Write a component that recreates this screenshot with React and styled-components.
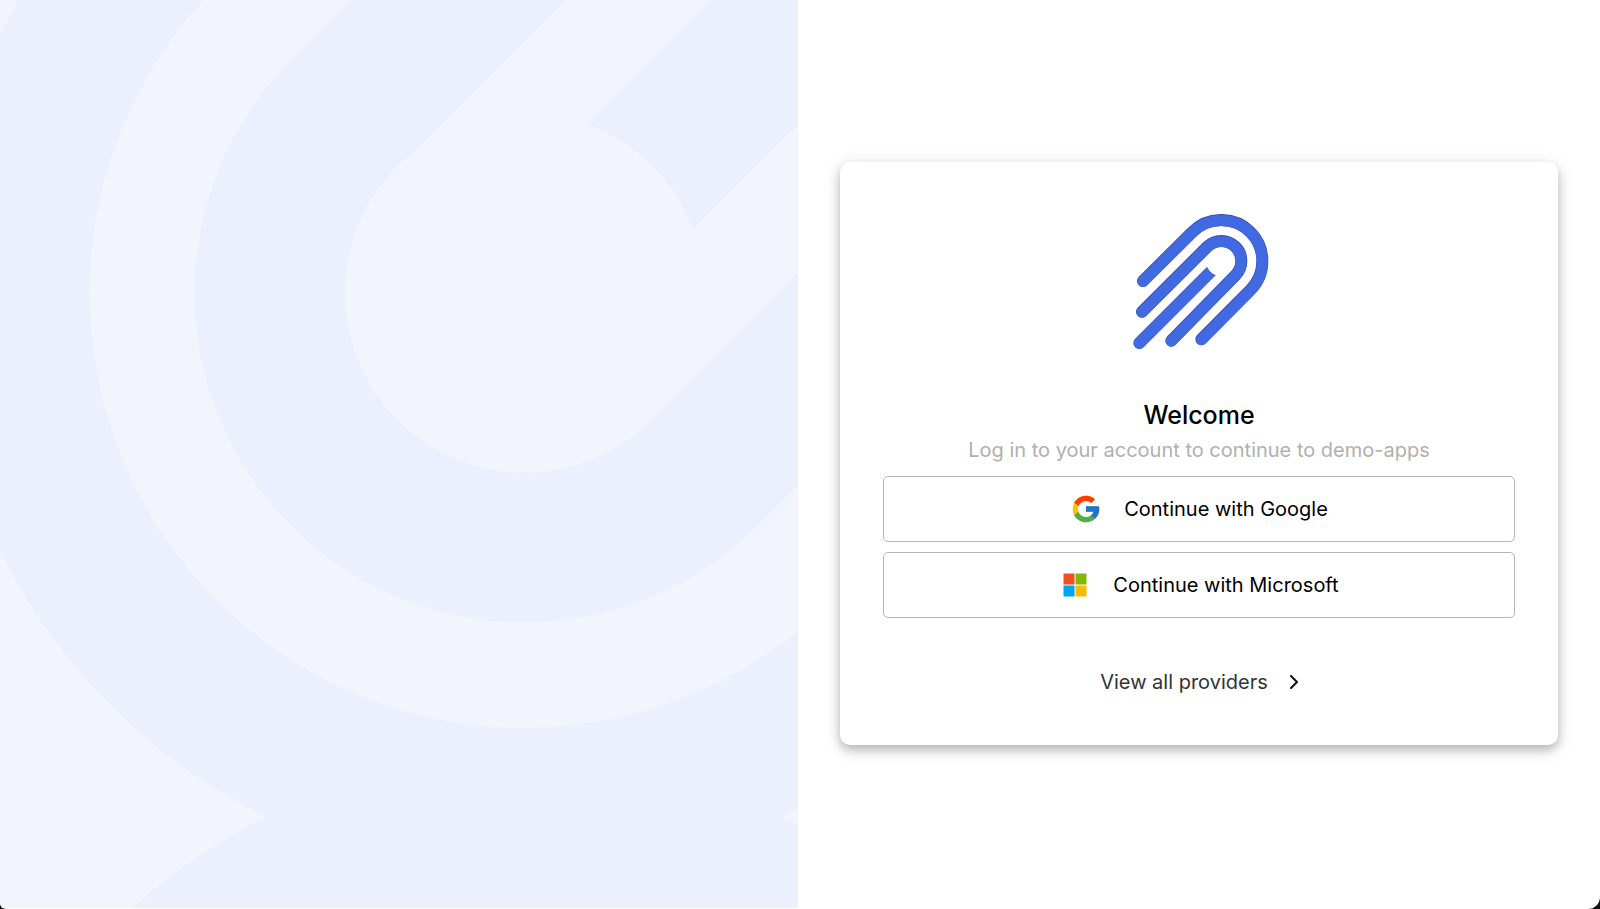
import React from 'react';
import styled, { createGlobalStyle } from 'styled-components';
import { FcGoogle } from 'react-icons/fc';

const GlobalStyle = createGlobalStyle`
  * {
    box-sizing: border-box;
  }

  body {
    margin: 0;
    background: #14100e;
    font-family: 'Inter', 'Liberation Sans', sans-serif;
  }
`;

const Page = styled.div`
  display: grid;
  grid-template-columns: minmax(0, 399fr) minmax(0, 401fr);
  min-height: 100vh;
  padding-bottom: 1px;
  background: #fff;
  border-radius: 0 0 12px 6px;
  overflow: hidden;
`;

const Cover = styled.aside`
  display: flex;
  background: #f2f5fe;
  overflow: hidden;
`;

const Pattern = styled.svg`
  flex: 1;
  width: 100%;
  min-height: 100%;
`;

const Main = styled.main`
  display: flex;
  align-items: center;
  justify-content: center;
  padding: 40px 42px 41px;
`;

const Card = styled.section`
  display: flex;
  flex-direction: column;
  align-items: center;
  width: 100%;
  padding: 52px 43px 40px;
  background: #fff;
  border-radius: 10px;
  box-shadow:
    0 5px 10px rgba(0, 0, 0, 0.2),
    0 4px 18px rgba(0, 0, 0, 0.14);
`;

const LogoSvg = styled.svg`
  width: 140px;
  height: 135px;
  margin-bottom: 48px;
  fill: none;
  stroke-linecap: round;
`;

const Title = styled.h1`
  margin: 0 0 1px;
  color: #000;
  font-size: 25px;
  font-weight: 500;
  line-height: 36px;
`;

const Subtitle = styled.p`
  margin: 0 0 10px;
  color: #b0b0b0;
  font-size: 20px;
  line-height: 32px;
  text-align: center;
`;

const Providers = styled.div`
  display: flex;
  flex-direction: column;
  gap: 10px;
  width: 100%;
`;

const ProviderButton = styled.button`
  display: flex;
  align-items: center;
  justify-content: center;
  gap: 22px;
  width: 100%;
  height: 66px;
  padding: 0 16px;
  border: 1px solid #b5b5b5;
  border-radius: 5px;
  background: #fff;
  color: #000;
  font-family: inherit;
  font-size: 20px;
  cursor: pointer;

  svg {
    flex: none;
    width: 32px;
    height: 32px;
  }

  &:hover {
    background: #f7f8fc;
  }
`;

const ViewAll = styled.button`
  display: flex;
  align-items: center;
  gap: 22px;
  margin-top: 41px;
  padding: 0;
  border: 0;
  background: none;
  color: #333;
  font-family: inherit;
  font-size: 20px;
  line-height: 46px;
  cursor: pointer;

  svg {
    width: 8px;
    height: 14px;
    fill: none;
    stroke: #111;
    stroke-width: 2;
    stroke-linecap: round;
    stroke-linejoin: round;
  }
`;

const CoverPattern = () => (
  <Pattern aria-hidden="true">
    <g fill="#ecf0fc">
      <circle cx="524" cy="293" r="584" />
      <circle cx="524" cy="1341" r="584" />
    </g>
    {/* outer band */}
    <path
      fill="#f2f5fe"
      d="M217 -14 A434.5 434.5 0 1 0 831.5 600.5 L1400 32 V-600 H803 Z"
    />
    <path
      fill="#ecf0fc"
      d="M291 60 A329.5 329.5 0 1 0 757.5 526 L1400 -116 V-600 H951 Z"
    />
    {/* inner disc with its two arms */}
    <circle cx="524.5" cy="293" r="179.5" fill="#f2f5fe" />
    <path
      fill="#f2f5fe"
      d="M397 169 L1166 -600 H1311 L587 124 L693 230 L1400 -477 V-329 L651 420 Z"
    />
    <path fill="#f2f5fe" d="M587 124 A179.5 179.5 0 0 1 693 230 L524 293 Z" />
  </Pattern>
);

const strands = [
  'M99 258 L247 111 A123 123 0 0 1 421 285 L274 433',
  'M96 350 L291.6 155.6 A60 60 0 0 1 334 138 A60 60 0 0 1 394 198 A60 60 0 0 1 376.4 240.4 L184 437'
];

const Logo = () => (
  <LogoSvg viewBox="57 57 420 405" role="img" aria-label="Logo">
    <path d="M88 444 L308 224" stroke="#3358c4" strokeWidth="36" />
    <path d="M88 445 L308 225" stroke="#4169e1" strokeWidth="34" />
    <circle cx="334" cy="198" r="46" fill="#fff" />
    {strands.map(d => (
      <g key={d}>
        <path d={d} stroke="#2c4fb5" strokeWidth="36" />
        <path d={d} stroke="#4169e1" strokeWidth="33" transform="translate(0 1.5)" />
      </g>
    ))}
  </LogoSvg>
);

const MicrosoftIcon = () => (
  <svg viewBox="0 0 32 32" aria-hidden="true">
    <path fill="#f25022" d="M4.5 4.5h11v11h-11z" />
    <path fill="#7fba00" d="M16.5 4.5h11v11h-11z" />
    <path fill="#00a4ef" d="M4.5 16.5h11v11h-11z" />
    <path fill="#ffb900" d="M16.5 16.5h11v11h-11z" />
  </svg>
);

const providers = [
  { name: 'Google', Icon: FcGoogle },
  { name: 'Microsoft', Icon: MicrosoftIcon }
];

const App = () => (
  <>
    <GlobalStyle />
    <Page>
      <Cover>
        <CoverPattern />
      </Cover>
      <Main>
        <Card>
          <Logo />
          <Title>Welcome</Title>
          <Subtitle>Log in to your account to continue to demo-apps</Subtitle>
          <Providers>
            {providers.map(({ name, Icon }) => (
              <ProviderButton key={name} type="button">
                <Icon />
                <span>Continue with {name}</span>
              </ProviderButton>
            ))}
          </Providers>
          <ViewAll type="button">
            View all providers
            <svg viewBox="0 0 8 14" aria-hidden="true">
              <path d="M1 1l6 6-6 6" />
            </svg>
          </ViewAll>
        </Card>
      </Main>
    </Page>
  </>
);

export default App;
